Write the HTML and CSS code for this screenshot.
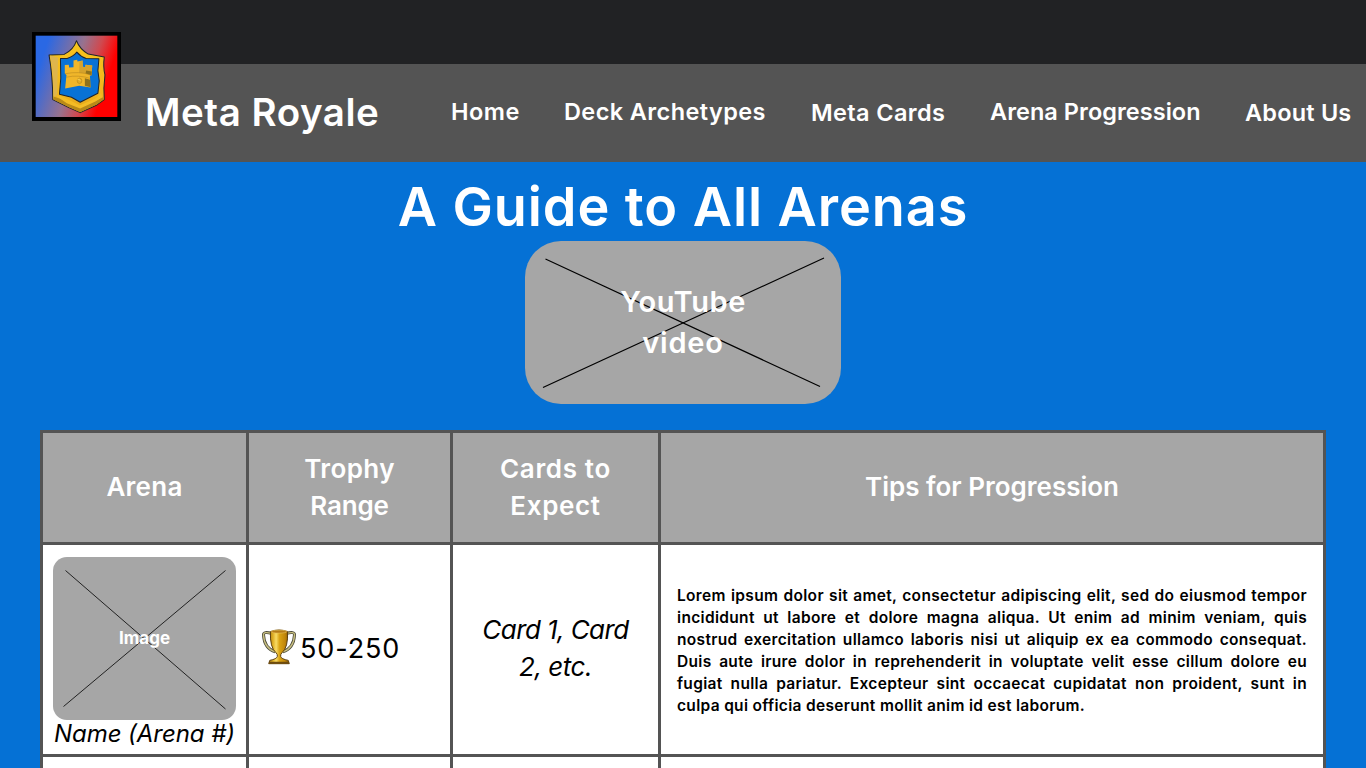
FILE: index.html
```html
<!DOCTYPE html>
<html lang="en">
<head>
<meta charset="utf-8">
<title>Meta Royale</title>
<link rel="stylesheet" href="styles.css">
</head>
<body>
<header class="header">
  <div class="topbar"></div>
  <div class="navbar">
    <div class="brand">Meta Royale</div>
    <nav class="nav">
      <a class="nav-home">Home</a>
      <a class="nav-decks">Deck Archetypes</a>
      <a class="nav-cards">Meta Cards</a>
      <a class="nav-arenas">Arena Progression</a>
      <a class="nav-about">About Us</a>
    </nav>
  </div>
  <svg class="logo" viewBox="22 22 266 266">
    <defs>
      <linearGradient id="bg" gradientUnits="userSpaceOnUse" x1="45" y1="120" x2="240" y2="185">
        <stop offset="0" stop-color="#2a68e4"/>
        <stop offset=".5" stop-color="#98728e"/>
        <stop offset=".75" stop-color="#d0494f"/>
        <stop offset="1" stop-color="#ff0000"/>
      </linearGradient>
      <linearGradient id="gold" x1="0" y1="0" x2="0" y2="1">
        <stop offset="0" stop-color="#f8c41d"/>
        <stop offset=".75" stop-color="#f2b51c"/>
        <stop offset="1" stop-color="#dca11c"/>
      </linearGradient>
    </defs>
    <rect x="22" y="22" width="266" height="266" fill="#000"/>
    <rect x="33" y="33" width="244" height="243" fill="url(#bg)"/>
    <path d="M73 91L118 89Q146 76 155 48Q164 72 190 88L238 97Q234 126 240 150Q235 190 238 224L216 240L166 263L132 248L84 224Q84 155 73 91Z" fill="url(#gold)" stroke="#20242b" stroke-width="3" stroke-linejoin="round"/>
    <path d="M76 92L100 98L97 208L86 221Q87 150 76 92Z" fill="#dfb54c"/>
    <path d="M86 215L108 222L166 247L214 227L236 216L237 223L216 239L166 261L132 246L86 224Z" fill="#b98a18"/>
    <path d="M92 211L110 214L165 241L212 221L228 204L232 216L213 229L166 251L126 235Z" fill="#f3bc25"/>
    <path d="M107 101L127 101Q148 94 156 82Q168 96 184 101L222 102L219 138L223 168L219 205L166 232L140 217L104 208L108 160Z" fill="#0872d5" stroke="#20242b" stroke-width="3" stroke-linejoin="round"/>
    <path d="M120 121L132 120L133 128L146 127V107L157 105L158 110L173 107L174 126L181 127L182 120L202 122L200 151L195 153L197 188L163 183L121 191L125 151L120 145Z" fill="#f0b62a"/>
    <path d="M164 110L173 107L174 126L181 127L182 120L202 122L200 150L183 145L163 144Z" fill="#d4a22c"/>
    <path d="M184 137L201 140L200 151L182 146ZM180 160L196 165L197 187L180 183Z" fill="#8e711c"/>
    <path d="M120 147Q162 138 200 151M125 157Q160 149 197 161" fill="none" stroke="#a87c1a" stroke-width="1.4"/>
    <ellipse cx="164" cy="168" rx="7" ry="8" fill="#e3ab25" stroke="#b98a1c" stroke-width="2"/>
    <path d="M158 164Q164 160 166 168" fill="none" stroke="#ffe06a" stroke-width="2"/>
  </svg>
</header>
<main class="main">
  <h1 class="title">A Guide to All Arenas</h1>
  <div class="video">
    <svg class="cross" viewBox="0 0 316 163"><path d="M20.500 18L295 145.500M18 146.500L299 17"/></svg>
    <div class="video-label"><div class="yt">YouTube</div><div class="vid">video</div></div>
  </div>
  <div class="table">
    <div class="th"><div class="h-arena">Arena</div></div>
    <div class="th"><div class="h-trophy">Trophy</div><div class="h-range">Range</div></div>
    <div class="th"><div class="h-cards">Cards to</div><div class="h-cards">Expect</div></div>
    <div class="th"><div class="h-tips">Tips for Progression</div></div>

    <div class="td arena">
      <div class="image">
        <svg class="cross thin" viewBox="0 0 183 163"><path d="M12.500 13.500L172.500 152M10.500 149.500L172.500 13.500"/></svg>
        <span class="image-label">Image</span>
      </div>
      <div class="arena-name">Name (Arena #)</div>
    </div>
    <div class="td trophies">
      <svg class="trophy" viewBox="20 22 106 112">
        <defs>
          <linearGradient id="cup" x1="0" x2="1" y1="0" y2="0">
            <stop offset="0" stop-color="#a87708"/>
            <stop offset=".22" stop-color="#e2b32a"/>
            <stop offset=".36" stop-color="#f8dc66"/>
            <stop offset=".52" stop-color="#dba414"/>
            <stop offset=".8" stop-color="#c0860a"/>
            <stop offset="1" stop-color="#7d5206"/>
          </linearGradient>
        </defs>
        <path d="M50 38Q26 32 26 42Q28 84 62 94M96 38Q120 32 120 42Q118 84 84 94" fill="none" stroke="#4d4c3c" stroke-width="9"/>
        <path d="M50 38Q26 32 26 42Q28 84 62 94M96 38Q120 32 120 42Q118 84 84 94" fill="none" stroke="#c9bf80" stroke-width="4"/>
        <path d="M47 33Q73 23 99 33Q101 81 82 97Q77 101 78 108Q80 116 101 120L104 130H42L45 120Q66 116 68 108Q69 101 64 97Q45 81 47 33Z" fill="url(#cup)" stroke="#5c4010" stroke-width="3"/>
        <ellipse cx="73" cy="33" rx="24" ry="4.500" fill="#b57b17" stroke="#e6c058" stroke-width="2"/>
        <path d="M43 124H103L104 130H42Z" fill="#6f4c0f"/>
      </svg>
      <span class="range">50-250</span>
    </div>
    <div class="td cards"><div class="card-a">Card 1, Card</div><div class="card-b">2, etc.</div></div>
    <div class="td tips">
      <p class="tip">Lorem ipsum dolor sit amet, consectetur adipiscing elit, sed do eiusmod tempor<br>incididunt ut labore et dolore magna aliqua. Ut enim ad minim veniam, quis<br>nostrud exercitation ullamco laboris nisi ut aliquip ex ea commodo consequat.<br>Duis aute irure dolor in reprehenderit in voluptate velit esse cillum dolore eu<br>fugiat nulla pariatur. Excepteur sint occaecat cupidatat non proident, sunt in</p>
      <p class="tip-end">culpa qui officia deserunt mollit anim id est laborum.</p>
    </div>

    <div class="td"></div><div class="td"></div><div class="td"></div><div class="td"></div>
  </div>
</main>
</body>
</html>
```
FILE: styles.css
```css
* { box-sizing: border-box; }
body {
  margin: 0;
  height: 768px;
  background: #0571d5;
  color: #fff;
  font-family: Inter, "Open Sans", sans-serif;
  font-weight: 600;
}
.header { position: relative; }
.topbar { height: 64px; background: #212224; }
.navbar {
  height: 97.5px;
  background: #545454;
  display: flex;
  padding-left: 145px;
  white-space: nowrap;
}
.logo { position: absolute; left: 32px; top: 32px; width: 89px; height: 89px; }
.brand { width: 306px; line-height: 96px; font-size: 38.5px; letter-spacing: .53px; }
.nav {
  display: grid;
  grid-template-columns: 113px 247px 179px 255px auto;
  font-size: 23.5px;
  line-height: 95px;
}
.nav-home { letter-spacing: .5px; }
.nav-decks { letter-spacing: .4px; }
.nav-cards { letter-spacing: .38px; line-height: 97px; }
.nav-arenas { letter-spacing: .04px; }
.nav-about { letter-spacing: .2px; line-height: 97px; }

.main { display: flex; flex-direction: column; align-items: center; }
.title {
  margin: 0;
  height: 79.500px;
  line-height: 90px;
  font-size: 54px;
  font-weight: 600;
  letter-spacing: .93px;
}
.video {
  display: grid;
  place-items: center;
  width: 316px;
  height: 163px;
  margin-bottom: 26px;
  border-radius: 36px;
  background: #a6a6a6;
}
.video > *, .image > * { grid-area: 1 / 1; }
.cross { width: 100%; height: 100%; fill: none; stroke: #000; stroke-width: 1.2; }
.thin { stroke-width: .8; }
.video-label { padding-bottom: 2px; font-size: 29px; line-height: 41px; text-align: center; }
.yt { letter-spacing: .56px; }
.vid { letter-spacing: .79px; }

.table {
  display: grid;
  grid-template-columns: 203px 201px 205px 662px;
  grid-template-rows: 109px 209px 11px;
  gap: 3px;
  padding: 3px 3px 0;
  background: #545454;
}
.th, .td {
  display: flex;
  flex-direction: column;
  justify-content: center;
  text-align: center;
  white-space: nowrap;
}
.th { padding-bottom: 2px; background: #a6a6a6; font-size: 26px; line-height: 37px; }
.td { background: #fff; color: #000; }
.h-arena { letter-spacing: .26px; }
.h-trophy { letter-spacing: .4px; }
.h-range { letter-spacing: -.2px; }
.h-cards { letter-spacing: .65px; }
.arena { justify-content: flex-start; align-items: center; padding-top: 12px; }
.image {
  display: grid;
  place-items: center;
  width: 183px;
  height: 163px;
  border-radius: 14px;
  background: #a6a6a6;
}
.image-label { padding-bottom: 1px; color: #fff; font-size: 17px; font-weight: 700; line-height: 20px; }
.arena-name { font-size: 24px; font-weight: 400; font-style: italic; line-height: 28px; letter-spacing: -.05px; }
.trophies { flex-direction: row; justify-content: flex-start; align-items: center; padding-left: 12px; }
.trophy { width: 36px; height: 37px; margin-right: 3px; margin-top: -6px; }
.range { font-size: 27px; font-weight: 400; letter-spacing: .9px; line-height: 36px; margin-top: -2px; }
.cards { padding-bottom: 3px; font-size: 26px; font-weight: 400; font-style: italic; line-height: 37px; }
.card-a { letter-spacing: -.57px; }
.card-b { letter-spacing: -.46px; }
.tips { padding: 2px 16px 0; font-size: 15.500px; line-height: 22px; letter-spacing: .32px; }
.tips p { margin: 0; white-space: normal; }
.tip { text-align: justify; text-align-last: justify; }
.tip-end { text-align: left; }
```
